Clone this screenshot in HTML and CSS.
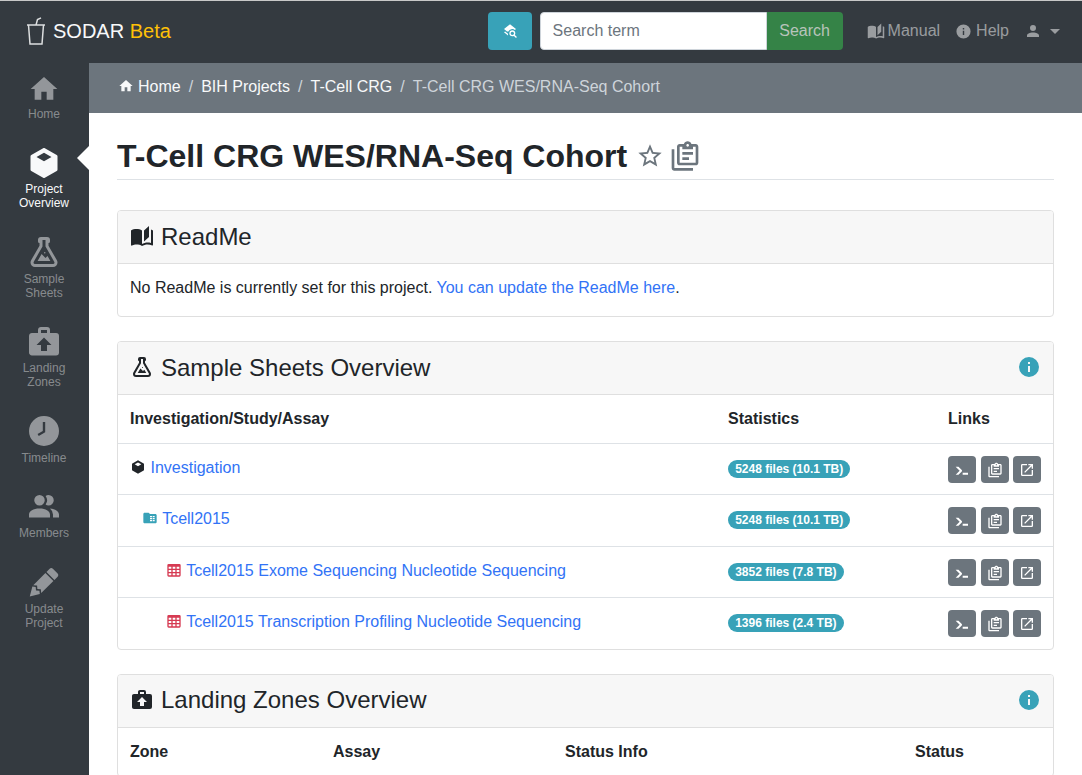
FILE: index.html
```html
<!DOCTYPE html>
<html lang="en">
<head>
  <meta charset="UTF-8">
  <title>T-Cell CRG WES/RNA-Seq Cohort</title>
  <link rel="stylesheet" href="styles.css">
</head>
<body>
  <svg class="icon-defs" xmlns="http://www.w3.org/2000/svg">
    <symbol id="i-home" viewBox="0 0 24 24"><path d="M10,20V14H14V20H19V12H22L12,3L2,12H5V20H10Z"/></symbol>
    <symbol id="i-cube" viewBox="0 0 24 24"><path fill-rule="evenodd" d="M21,16.5C21,16.88 20.79,17.21 20.47,17.38L12.57,21.82C12.41,21.94 12.21,22 12,22C11.79,22 11.59,21.94 11.43,21.82L3.53,17.38C3.21,17.21 3,16.88 3,16.5V7.5C3,7.12 3.21,6.79 3.53,6.62L11.43,2.18C11.59,2.06 11.79,2 12,2C12.21,2 12.41,2.06 12.57,2.18L20.47,6.62C20.79,6.79 21,7.12 21,7.5V16.5ZM12,5.2L7,8L12,10.8L17,8L12,5.2Z"/></symbol>
    <symbol id="i-flask" viewBox="0 0 24 24"><path d="M5,19A1,1 0 0,0 6,20H18A1,1 0 0,0 19,19C19,18.79 18.93,18.59 18.82,18.43L13,8.35V4H11V8.35L5.18,18.43C5.07,18.59 5,18.79 5,19M6,22A3,3 0 0,1 3,19C3,18.4 3.18,17.84 3.5,17.37L9,7.81V6A1,1 0 0,1 8,5V4A2,2 0 0,1 10,2H14A2,2 0 0,1 16,4V5A1,1 0 0,1 15,6V7.81L20.5,17.37C20.82,17.84 21,18.4 21,19A3,3 0 0,1 18,22H6M13,16L14.34,14.66L16.27,18H7.73L10.39,13.39L13,16M12.5,12A0.5,0.5 0 0,1 13,12.5A0.5,0.5 0 0,1 12.5,13A0.5,0.5 0 0,1 12,12.5A0.5,0.5 0 0,1 12.5,12Z"/></symbol>
    <symbol id="i-briefcase" viewBox="0 0 24 24"><path d="M10,2H14A2,2 0 0,1 16,4V6H20A2,2 0 0,1 22,8V19A2,2 0 0,1 20,21H4C2.89,21 2,20.1 2,19V8C2,6.89 2.89,6 4,6H8V4C8,2.89 8.89,2 10,2M14,6V4H10V6H14M12,9L7,14H10V18H14V14H17L12,9Z"/></symbol>
    <symbol id="i-clock" viewBox="0 0 24 24"><path fill-rule="evenodd" d="M12,2A10,10 0 0,0 2,12A10,10 0 0,0 12,22A10,10 0 0,0 22,12A10,10 0 0,0 12,2ZM11.2,6H12.8V12.9L8.5,15.4L7.7,14L11.2,12Z"/></symbol>
    <symbol id="i-members" viewBox="0 0 24 24"><path d="M16 17V19H2V17S2 13 9 13 16 17 16 17M12.5 7.5A3.5 3.5 0 1 0 9 11A3.5 3.5 0 0 0 12.5 7.5M15.94 13A5.32 5.32 0 0 1 18 17V19H22V17S22 13.37 15.94 13M15 4A3.39 3.39 0 0 0 13.07 4.59A5 5 0 0 1 13.07 10.41A3.39 3.39 0 0 0 15 11A3.5 3.5 0 0 0 15 4Z"/></symbol>
    <symbol id="i-pencil" viewBox="0 0 24 24"><path d="M16.84,2.73C16.45,2.73 16.07,2.88 15.77,3.17L13.65,5.29L18.95,10.6L21.07,8.5C21.67,7.89 21.67,6.94 21.07,6.36L17.9,3.17C17.6,2.88 17.22,2.73 16.84,2.73M12.94,6L4.84,14.11L7.4,14.39L7.58,16.68L9.86,16.85L10.15,19.41L18.25,11.3M4.25,15.04L2.5,21.73L9.2,19.94L8.96,17.78L6.65,17.61L6.47,15.29"/></symbol>
    <symbol id="i-book" viewBox="0 0 24 24"><path d="M19 2L14 6.5V17.5L19 13V2M6.5 5C4.55 5 2.45 5.4 1 6.5V21.16C1 21.41 1.25 21.66 1.5 21.66C1.6 21.66 1.65 21.59 1.75 21.59C3.1 20.94 5.05 20.5 6.5 20.5C8.45 20.5 10.55 20.9 12 22C13.35 21.15 15.8 20.5 17.5 20.5C19.15 20.5 20.85 20.81 22.25 21.56C22.35 21.61 22.4 21.59 22.5 21.59C22.75 21.59 23 21.34 23 21.09V6.5C22.4 6.05 21.75 5.75 21 5.5V19C19.9 18.65 18.7 18.5 17.5 18.5C15.8 18.5 13.35 19.15 12 20V6.5C10.55 5.4 8.45 5 6.5 5Z"/></symbol>
    <symbol id="i-info" viewBox="0 0 24 24"><path d="M13,9H11V7H13M13,17H11V11H13M12,2A10,10 0 0,0 2,12A10,10 0 0,0 12,22A10,10 0 0,0 22,12A10,10 0 0,0 12,2Z"/></symbol>
    <symbol id="i-account" viewBox="0 0 24 24"><path d="M12,4A4,4 0 0,1 16,8A4,4 0 0,1 12,12A4,4 0 0,1 8,8A4,4 0 0,1 12,4M12,14C16.42,14 20,15.79 20,18V20H4V18C4,15.79 7.58,14 12,14Z"/></symbol>
    <symbol id="i-star" viewBox="0 0 24 24"><path d="M12,15.39L8.24,17.66L9.23,13.38L5.91,10.5L10.29,10.13L12,6.09L13.71,10.13L18.09,10.5L14.77,13.38L15.76,17.66M22,9.24L14.81,8.63L12,2L9.19,8.62L2,9.24L7.45,13.97L5.82,21L12,17.27L18.18,21L16.54,13.97L22,9.24Z"/></symbol>
    <symbol id="i-clipboard" viewBox="0 0 24 24"><path d="M4 7V21H18V23H4C2.9 23 2 22.1 2 21V7H4M20 3C21.1 3 22 3.9 22 5V17C22 18.1 21.1 19 20 19H8C6.9 19 6 18.1 6 17V5C6 3.9 6.9 3 8 3H11.18C11.6 1.84 12.7 1 14 1C15.3 1 16.4 1.84 16.82 3H20M14 3C13.45 3 13 3.45 13 4C13 4.55 13.45 5 14 5C14.55 5 15 4.55 15 4C15 3.45 14.55 3 14 3M10 7V5H8V17H20V5H18V7H10M15 15H10V13H15V15M18 11H10V9H18V11Z"/></symbol>
    <symbol id="i-console" viewBox="0 0 24 24"><path d="M13,19V16H21V19H13M8.5,13L2.47,7H6.71L11.67,11.95C12.25,12.54 12.25,13.5 11.67,14.07L6.74,19H2.5L8.5,13Z"/></symbol>
    <symbol id="i-open" viewBox="0 0 24 24"><path d="M14,3V5H17.59L7.76,14.83L9.17,16.24L19,6.41V10H21V3M19,19H5V5H12V3H5C3.89,3 3,3.9 3,5V19A2,2 0 0,0 5,21H19A2,2 0 0,0 21,19V12H19V19Z"/></symbol>
    <symbol id="i-table" viewBox="0 0 24 24"><path d="M4,3H20A2,2 0 0,1 22,5V20A2,2 0 0,1 20,22H4A2,2 0 0,1 2,20V5A2,2 0 0,1 4,3M4,7V10H8V7H4M10,7V10H14V7H10M20,10V7H16V10H20M4,12V15H8V12H4M4,20H8V17H4V20M10,12V15H14V12H10M10,20H14V17H10V20M20,20V17H16V20H20M20,12H16V15H20V12Z"/></symbol>
    <symbol id="i-folder" viewBox="0 0 24 24"><path d="M4 4C2.89 4 2 4.89 2 6V18C2 19.1 2.9 20 4 20H20C21.1 20 22 19.1 22 18V8C22 6.9 21.1 6 20 6H12L10 4H4M12 9H15V11H12V9M16 9H19V11H16V9M12 12H15V14H12V12M16 12H19V14H16V12M12 15H15V17H12V15M16 15H19V17H16V15Z"/></symbol>
    <symbol id="i-search" viewBox="0 0 24 24"><path d="M19.31 17.9L22.39 21L21 22.39L17.88 19.32C17.19 19.75 16.37 20 15.5 20C13 20 11 18 11 15.5C11 13 13 11 15.5 11C18 11 20 13 20 15.5C20 16.38 19.75 17.21 19.31 17.9M15.5 18C16.88 18 18 16.88 18 15.5C18 14.12 16.88 13 15.5 13C14.12 13 13 14.12 13 15.5C13 16.88 14.12 18 15.5 18M12 2L3 9L7.6 12.6H9.6A6.8 6.8 0 0 1 19.4 10.4L21 9L12 2M3 14L4.6 12.7L9 16.1V18.6L3 14Z"/></symbol>
  </svg>

  <nav class="topbar">
    <a class="brand" href="#">
      <svg class="brand-logo" viewBox="0 0 18 28" fill="none" stroke="#dcdedf" stroke-width="1.5">
        <path d="M0 8H18M1.5 8L3 27H15L16.5 8M9 8L10.5 2.5L14 .8"/>
      </svg>
      <span>SODAR <span class="brand-beta">Beta</span></span>
    </a>
    <button class="btn-advanced"><svg class="icon icon-16"><use href="#i-search"/></svg></button>
    <div class="search-group">
      <input class="search-input" type="text" placeholder="Search term">
      <button class="search-btn">Search</button>
    </div>
    <a class="top-link top-manual" href="#"><svg class="icon icon-18"><use href="#i-book"/></svg>Manual</a>
    <a class="top-link top-help" href="#"><svg class="icon icon-17"><use href="#i-info"/></svg>Help</a>
    <a class="top-link top-user" href="#"><svg class="icon icon-18"><use href="#i-account"/></svg><span class="caret"></span></a>
  </nav>

  <div class="layout">
    <aside class="sidebar">
      <a class="side-item" href="#"><svg class="icon side-home"><use href="#i-home"/></svg><span>Home</span></a>
      <a class="side-item active" href="#"><svg class="icon side-icon"><use href="#i-cube"/></svg><span>Project<br>Overview</span></a>
      <a class="side-item" href="#"><svg class="icon side-icon"><use href="#i-flask"/></svg><span>Sample<br>Sheets</span></a>
      <a class="side-item" href="#"><svg class="icon side-icon"><use href="#i-briefcase"/></svg><span>Landing<br>Zones</span></a>
      <a class="side-item" href="#"><svg class="icon side-icon"><use href="#i-clock"/></svg><span>Timeline</span></a>
      <a class="side-item" href="#"><svg class="icon side-icon"><use href="#i-members"/></svg><span>Members</span></a>
      <a class="side-item" href="#"><svg class="icon side-icon"><use href="#i-pencil"/></svg><span>Update<br>Project</span></a>
    </aside>

    <main class="main">
      <ol class="crumbs">
        <li><a href="#"><svg class="icon icon-16 crumb-home"><use href="#i-home"/></svg>Home</a></li>
        <li><a href="#">BIH Projects</a></li>
        <li><a href="#">T-Cell CRG</a></li>
        <li class="current">T-Cell CRG WES/RNA-Seq Cohort</li>
      </ol>

      <div class="content">
        <div class="title-bar">
          <h2>T-Cell CRG WES/RNA-Seq Cohort</h2>
          <svg class="icon title-star"><use href="#i-star"/></svg>
          <svg class="icon title-clip"><use href="#i-clipboard"/></svg>
        </div>

        <section class="card">
          <header class="card-head"><svg class="icon icon-24"><use href="#i-book"/></svg><h4>ReadMe</h4></header>
          <div class="card-body">No ReadMe is currently set for this project. <a href="#">You can update the ReadMe here</a>.</div>
        </section>

        <section class="card">
          <header class="card-head"><svg class="icon icon-24"><use href="#i-flask"/></svg><h4>Sample Sheets Overview</h4><svg class="icon icon-24 head-info"><use href="#i-info"/></svg></header>
          <table class="overview">
            <thead>
              <tr><th class="col-name">Investigation/Study/Assay</th><th class="col-stats">Statistics</th><th>Links</th></tr>
            </thead>
            <tbody>
              <tr>
                <td><svg class="icon icon-16"><use href="#i-cube"/></svg> <a href="#">Investigation</a></td>
                <td><span class="badge">5248 files (10.1 TB)</span></td>
                <td><div class="links"><button class="btn-sm"><svg class="icon icon-16"><use href="#i-console"/></svg></button><button class="btn-sm"><svg class="icon icon-16"><use href="#i-clipboard"/></svg></button><button class="btn-sm"><svg class="icon icon-16"><use href="#i-open"/></svg></button></div></td>
              </tr>
              <tr>
                <td class="indent-1"><svg class="icon icon-16 icon-study"><use href="#i-folder"/></svg> <a href="#">Tcell2015</a></td>
                <td><span class="badge">5248 files (10.1 TB)</span></td>
                <td><div class="links"><button class="btn-sm"><svg class="icon icon-16"><use href="#i-console"/></svg></button><button class="btn-sm"><svg class="icon icon-16"><use href="#i-clipboard"/></svg></button><button class="btn-sm"><svg class="icon icon-16"><use href="#i-open"/></svg></button></div></td>
              </tr>
              <tr>
                <td class="indent-2"><svg class="icon icon-16 icon-assay"><use href="#i-table"/></svg> <a href="#">Tcell2015 Exome Sequencing Nucleotide Sequencing</a></td>
                <td><span class="badge">3852 files (7.8 TB)</span></td>
                <td><div class="links"><button class="btn-sm"><svg class="icon icon-16"><use href="#i-console"/></svg></button><button class="btn-sm"><svg class="icon icon-16"><use href="#i-clipboard"/></svg></button><button class="btn-sm"><svg class="icon icon-16"><use href="#i-open"/></svg></button></div></td>
              </tr>
              <tr>
                <td class="indent-2"><svg class="icon icon-16 icon-assay"><use href="#i-table"/></svg> <a href="#">Tcell2015 Transcription Profiling Nucleotide Sequencing</a></td>
                <td><span class="badge">1396 files (2.4 TB)</span></td>
                <td><div class="links"><button class="btn-sm"><svg class="icon icon-16"><use href="#i-console"/></svg></button><button class="btn-sm"><svg class="icon icon-16"><use href="#i-clipboard"/></svg></button><button class="btn-sm"><svg class="icon icon-16"><use href="#i-open"/></svg></button></div></td>
              </tr>
            </tbody>
          </table>
        </section>

        <section class="card">
          <header class="card-head"><svg class="icon icon-24"><use href="#i-briefcase"/></svg><h4>Landing Zones Overview</h4><svg class="icon icon-24 head-info"><use href="#i-info"/></svg></header>
          <table class="zones">
            <thead>
              <tr><th class="zone-col">Zone</th><th class="assay-col">Assay</th><th class="info-col">Status Info</th><th>Status</th></tr>
            </thead>
          </table>
        </section>
      </div>
    </main>
  </div>
</body>
</html>
```

FILE: styles.css
```css
:root {
  --dark: #343a40;
  --gray: #6c757d;
  --info: #38a2b8;
  --link: #3273f6;
  --text: #212529;
  --line: #dee2e6;
  --card-line: #dfdfdf;
}

* {
  margin: 0;
  padding: 0;
  box-sizing: border-box;
}

body {
  font-family: "Liberation Sans", Arial, sans-serif;
  font-size: 16px;
  line-height: 24px;
  color: var(--text);
  height: 100vh;
  overflow: hidden;
  display: flex;
  flex-direction: column;
}

a {
  color: var(--link);
  text-decoration: none;
}

.icon-defs {
  display: none;
}

.icon {
  fill: currentColor;
  flex: none;
  vertical-align: -2px;
}

.icon-16 { width: 16px; height: 16px; }
.icon-17 { width: 17px; height: 17px; }
.icon-18 { width: 18px; height: 18px; }
.icon-24 { width: 24px; height: 24px; }

/* top bar */
.topbar {
  height: 63px;
  flex: none;
  display: flex;
  align-items: center;
  background: var(--dark);
  border-top: 1px solid #c8c8c8;
  padding: 0 22px 2px 27px;
}

.brand {
  display: flex;
  align-items: center;
  gap: 8px;
  color: #f8f9fa;
  font-size: 20px;
  margin-right: auto;
}

.brand-logo {
  width: 18px;
  height: 28px;
  overflow: visible;
}

.brand-beta {
  color: #ffc107;
}

.btn-advanced {
  width: 44px;
  height: 38px;
  border: none;
  border-radius: 4px;
  background: var(--info);
  color: #fff;
  display: flex;
  align-items: center;
  justify-content: center;
  margin-right: 8px;
}

.search-group {
  display: flex;
  margin-right: 24px;
}

.search-input {
  width: 227px;
  height: 38px;
  border: 1px solid #ced4da;
  border-radius: 4px 0 0 4px;
  padding: 0 12px;
  font: inherit;
  background: #fff;
}

.search-input::placeholder {
  color: var(--gray);
}

.search-btn {
  width: 76px;
  height: 38px;
  border: none;
  border-radius: 0 4px 4px 0;
  background: #358347;
  color: #b8c4bb;
  font: inherit;
}

.top-link {
  display: flex;
  align-items: center;
  gap: 3px;
  color: rgba(255, 255, 255, 0.5);
}

.top-manual { margin-right: 15px; }
.top-help { margin-right: 15px; gap: 4px; }
.top-user { gap: 8px; }

.caret {
  width: 0;
  height: 0;
  border-top: 5px solid currentColor;
  border-left: 5px solid transparent;
  border-right: 5px solid transparent;
}

/* sidebar + main */
.layout {
  flex: 1;
  display: flex;
  min-height: 0;
}

.sidebar {
  width: 89px;
  flex: none;
  background: var(--dark);
  display: flex;
  flex-direction: column;
  gap: 25.44px;
  padding: 8px 1px 0 0;
}

.side-item {
  position: relative;
  display: flex;
  flex-direction: column;
  align-items: center;
  text-align: center;
  font-size: 12px;
  line-height: 14px;
  color: rgba(255, 255, 255, 0.42);
}

.side-icon {
  width: 36px;
  height: 36px;
  margin: -1.5px 0 1.5px;
  color: rgba(255, 255, 255, 0.47);
}

.side-home {
  width: 32px;
  height: 32px;
  margin: 2px 0;
  color: rgba(255, 255, 255, 0.47);
}

.side-item.active,
.side-item.active .side-icon {
  color: #f8f9fa;
}

.side-item.active::after {
  content: "";
  position: absolute;
  right: -1px;
  top: 0;
  border-top: 12px solid transparent;
  border-bottom: 12px solid transparent;
  border-right: 12px solid #fff;
}

.main {
  flex: 1;
  min-width: 0;
  overflow: hidden;
}

.crumbs {
  list-style: none;
  display: flex;
  height: 50px;
  align-items: center;
  background: var(--gray);
  padding: 0 29px 2px;
  color: #ced4da;
}

.crumbs a {
  color: #f8f9fa;
}

.crumbs li + li::before {
  content: "/";
  padding: 0 8px;
  color: #ced4da;
}

.crumb-home {
  margin: 0 4px 0 0;
}

.content {
  padding: 0 28px;
}

.title-bar {
  display: flex;
  align-items: center;
  height: 67px;
  margin-bottom: 30px;
  border-bottom: 1px solid var(--line);
  padding-top: 20px;
}

.title-bar h2 {
  font-size: 32px;
  line-height: 38px;
  font-weight: 700;
}

.title-star {
  width: 28px;
  height: 28px;
  margin-left: 9px;
  color: var(--gray);
}

.title-clip {
  width: 32px;
  height: 32px;
  margin-left: 5px;
  color: var(--gray);
}

/* cards */
.card {
  border: 1px solid var(--card-line);
  border-radius: 4px;
  margin-bottom: 24px;
  overflow: hidden;
}

.card-head {
  height: 53px;
  display: flex;
  align-items: center;
  gap: 7px;
  padding: 0 12px 2px;
  background: #f7f7f7;
  border-bottom: 1px solid var(--card-line);
}

.card-head h4 {
  font-size: 24px;
  line-height: 29px;
  font-weight: 400;
}

.head-info {
  margin-left: auto;
  color: var(--info);
}

.card-body {
  height: 52px;
  padding: 12px 12px;
}

table {
  width: 100%;
  border-collapse: collapse;
  table-layout: fixed;
}

th {
  text-align: left;
  padding: 12px;
  font-weight: 700;
}

.overview td {
  padding: 12px 12px 11px;
  border-top: 1px solid var(--line);
  vertical-align: top;
}

/* rows alternate 51px / 52px */
.overview tbody tr:nth-child(odd) td { height: 51px; }
.overview tbody tr:nth-child(even) td { height: 52px; }
.overview tbody tr:last-child td { height: 51px; }

.col-name { width: 598px; }
.col-stats { width: 220px; }

.indent-1 { padding-left: 24px !important; }
.indent-2 { padding-left: 48px !important; }

.icon-study { color: var(--info); }
.icon-assay { color: #d63a52; }

.badge {
  display: inline-block;
  background: var(--info);
  color: #fff;
  font-size: 12px;
  font-weight: 700;
  line-height: 18px;
  padding: 0 7.2px;
  border-radius: 9px;
}

.links {
  display: flex;
  gap: 5px;
}

.btn-sm {
  width: 28px;
  height: 27px;
  border: none;
  border-radius: 4px;
  background: var(--gray);
  color: #fff;
  display: flex;
  align-items: center;
  justify-content: center;
}

.btn-sm:nth-child(3) {
  margin-left: -1px;
}

.zone-col { width: 203px; }
.assay-col { width: 232px; }
.info-col { width: 350px; }
```
